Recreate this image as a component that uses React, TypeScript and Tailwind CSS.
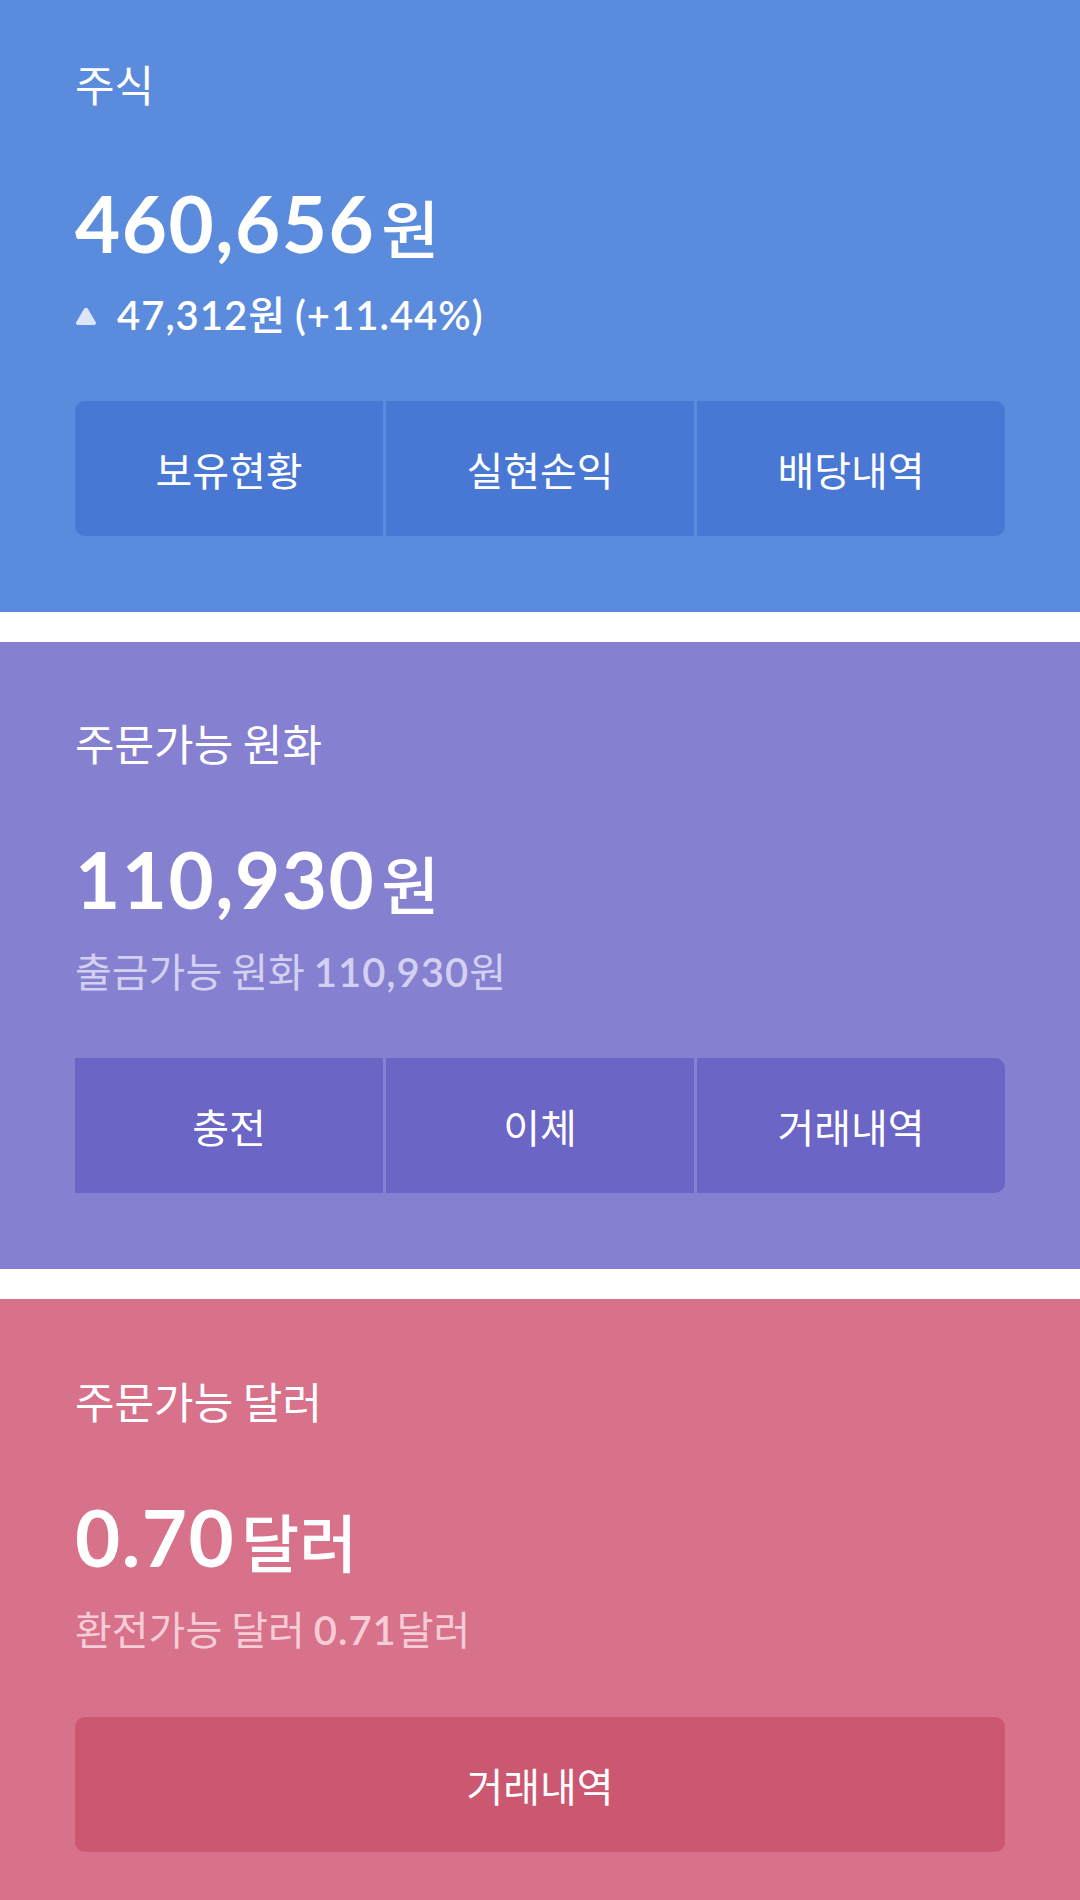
import React from "react"

const KR = "font-['Noto_Sans_CJK_KR',sans-serif]"
const NUM = "font-['Lato','Noto_Sans_CJK_KR',sans-serif]"

function Amount({ value, unit }: { value: string; unit: string }) {
  return (
    <div className={`${NUM} text-[78px] leading-[80px] font-bold text-white`}>
      <span className="tracking-[1.5px]">{value}</span>
      <span className={`${KR} ml-[6px] text-[63px] font-medium`}>{unit}</span>
    </div>
  )
}

function ButtonRow({
  labels,
  btn,
  rounded,
}: {
  labels: string[]
  btn: string
  rounded: string
}) {
  return (
    <div className={`flex gap-[3px] overflow-hidden ${rounded}`}>
      {labels.map((l) => (
        <button
          key={l}
          className={`${KR} ${btn} flex h-[135px] flex-1 items-center justify-center text-[40px] text-white`}
        >
          {l}
        </button>
      ))}
    </div>
  )
}

export default function App() {
  return (
    <div className="flex w-[1080px] flex-col gap-[30px] bg-white">
      {/* 주식 */}
      <section className="bg-[#5b8bdc] px-[75px] pt-[59px] pb-[76px]">
        <div className={`${KR} text-[43px] leading-[48px] text-white`}>주식</div>
        <div className="mt-[76px]">
          <Amount value="460,656" unit="원" />
        </div>
        <div className={`${NUM} mt-[25px] flex items-center text-[40px] leading-[44px] font-semibold text-white`}>
          <svg width="22" height="18" viewBox="0 0 22 18" className="mr-[20px] mt-[4px]">
            <path d="M9.3 1.6a2 2 0 0 1 3.4 0l8 13.4a2 2 0 0 1-1.7 3H3a2 2 0 0 1-1.7-3z" fill="#dce6f8" />
          </svg>
          <span>
            <span className="tracking-[1px]">47,312</span>
            <span className={`${KR} font-medium`}>원</span> <span className="tracking-[1px]">(+11.44%)</span>
          </span>
        </div>
        <div className="mt-[64px]">
          <ButtonRow labels={["보유현황", "실현손익", "배당내역"]} btn="bg-[#4877d4]" rounded="rounded-[10px]" />
        </div>
      </section>

      {/* 주문가능 원화 */}
      <section className="bg-[#8680d1] px-[75px] pt-[76px] pb-[76px]">
        <div className={`${KR} text-[43px] leading-[48px] text-white`}>주문가능 원화</div>
        <div className="mt-[73px]">
          <Amount value="110,930" unit="원" />
        </div>
        <div className={`${KR} mt-[26px] text-[40px] leading-[44px] text-[#d3d0f1]`}>
          출금가능 원화 <span className={`${NUM} font-semibold tracking-[1px]`}>110,930</span>원
        </div>
        <div className="mt-[64px]">
          <ButtonRow labels={["충전", "이체", "거래내역"]} btn="bg-[#6b65c6]" rounded="rounded-r-[10px]" />
        </div>
      </section>

      {/* 주문가능 달러 */}
      <section className="bg-[#d8718a] px-[75px] pt-[77px] pb-[76px]">
        <div className={`${KR} text-[43px] leading-[48px] text-white`}>주문가능 달러</div>
        <div className="mt-[73px]">
          <Amount value="0.70" unit="달러" />
        </div>
        <div className={`${KR} mt-[26px] text-[40px] leading-[44px] text-[#f6ccd7]`}>
          환전가능 달러 <span className={`${NUM} font-semibold tracking-[1px]`}>0.71</span>달러
        </div>
        <div className="mt-[65px]">
          <ButtonRow labels={["거래내역"]} btn="bg-[#cb5770]" rounded="rounded-[10px]" />
        </div>
      </section>
    </div>
  )
}
